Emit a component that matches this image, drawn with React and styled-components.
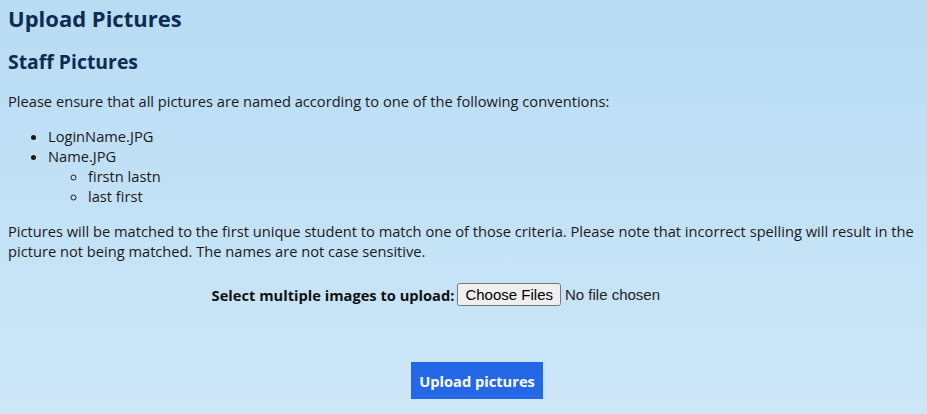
import React from 'react'
import styled, { createGlobalStyle } from 'styled-components'

const GlobalStyle = createGlobalStyle`
    html, body {
        margin: 0;
        padding: 0;
        height: 100%;
    }
    body {
        font-family: 'Open Sans', sans-serif;
        font-size: 14.67px;
        color: #1a1a1a;
        background: linear-gradient(to bottom, #b8dcf4, #cde7f8);
        background-attachment: fixed;
        min-height: 414px;
    }
`

export default () => {
    return (
        <>
        <GlobalStyle/>
        <Page>
            <Title>Upload Pictures</Title>
            <SubTitle>Staff Pictures</SubTitle>
            <Paragraph>Please ensure that all pictures are named according to one of the following conventions:</Paragraph>
            <List>
                <li>LoginName.JPG</li>
                <li>Name.JPG
                    <SubList>
                        <li>firstn lastn</li>
                        <li>last first</li>
                    </SubList>
                </li>
            </List>
            <Paragraph>
                Pictures will be matched to the first unique student to match one of those criteria. Please note that incorrect spelling will result in the picture not being matched. The names are not case sensitive.
            </Paragraph>
            <FileRow>
                <Label htmlFor="pics">Select multiple images to upload:</Label>
                <FileInput id="pics" type="file" multiple accept="image/*"/>
            </FileRow>
            <ButtonRow>
                <UploadButton>Upload pictures</UploadButton>
            </ButtonRow>
        </Page>
        </>
    )
}

const Page = styled.div`
    padding: 0 8px;
`

const Title = styled.h1`
    font-size: 22px;
    font-weight: 700;
    color: #0c2c52;
    margin: 0;
    padding-top: 2px;
    line-height: 32px;
`

const SubTitle = styled.h2`
    font-size: 19.4px;
    font-weight: 700;
    color: #0c2c52;
    margin: 14px 0 0;
    line-height: 28px;
`

const Paragraph = styled.p`
    margin: 15px 0;
    line-height: 20px;
`

const List = styled.ul`
    margin: 0;
    padding-left: 40px;
    line-height: 20px;
    list-style: disc;
`

const SubList = styled.ul`
    margin: 0;
    padding-left: 40px;
    list-style: circle;
`

const FileRow = styled.div`
    display: flex;
    justify-content: center;
    align-items: center;
    margin-top: 22px;
`

const Label = styled.label`
    font-weight: 700;
    color: #111;
    margin-right: 3px;
`

const FileInput = styled.input`
    font-family: 'Liberation Sans', Arial, sans-serif;
    font-size: 15px;
    color: #222;
    width: 258px;
`

const ButtonRow = styled.div`
    display: flex;
    justify-content: center;
    margin-top: 56px;
    padding-left: 27px;
`

const UploadButton = styled.button`
    font-family: 'Open Sans', sans-serif;
    font-size: 14.67px;
    font-weight: 700;
    color: #fff;
    background-color: #2468e8;
    border: none;
    width: 132px;
    height: 37px;
    padding: 0;
    cursor: pointer;
`
